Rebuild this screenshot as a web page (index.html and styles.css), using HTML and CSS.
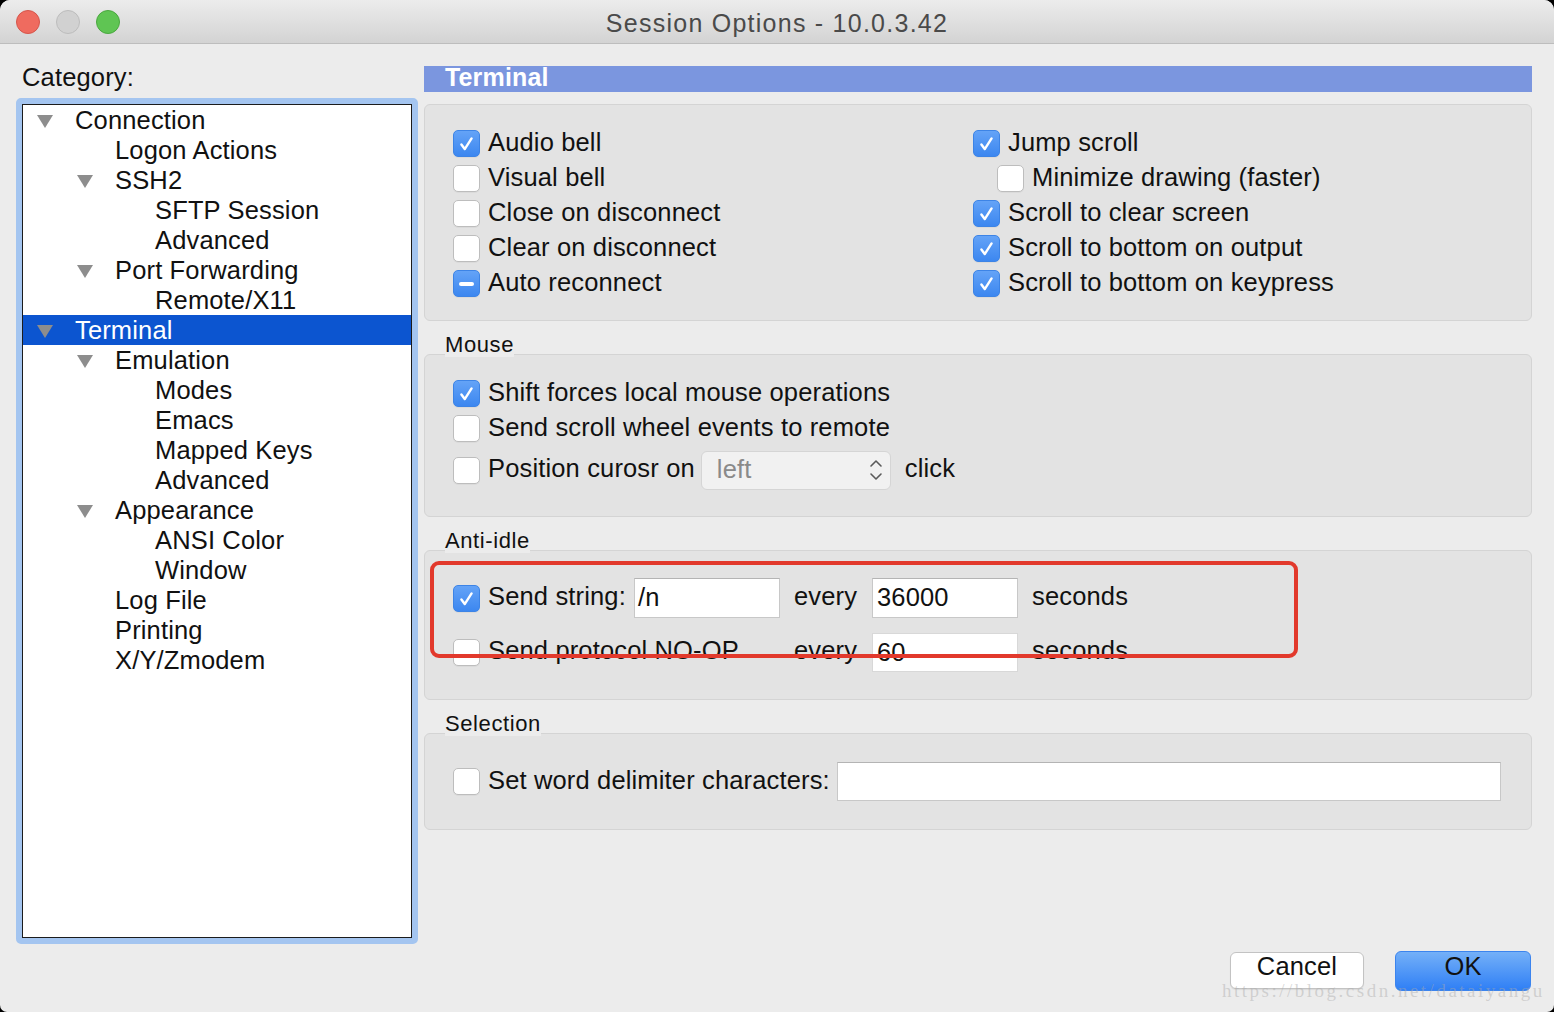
FILE: index.html
```html
<!DOCTYPE html>
<html lang="en">
<head>
<meta charset="utf-8">
<title>Session Options - 10.0.3.42</title>
<link rel="stylesheet" href="styles.css">
</head>
<body>
<div class="window">
  <div class="titlebar">
    <div class="lights">
      <span class="light red"></span>
      <span class="light gray"></span>
      <span class="light green"></span>
    </div>
    <div class="title">Session Options - 10.0.3.42</div>
    <div></div>
  </div>

  <div class="main">
    <div class="left">
      <div class="cat-label">Category:</div>
      <div class="tree-ring">
        <ul class="tree">
          <li class="l0"><span class="tw"><svg viewBox="0 0 16 13" width="16" height="13"><polygon points="0,0 16,0 8,13"/></svg></span>Connection</li>
          <li class="l1"><span class="tw"></span>Logon Actions</li>
          <li class="l1"><span class="tw"><svg viewBox="0 0 16 13" width="16" height="13"><polygon points="0,0 16,0 8,13"/></svg></span>SSH2</li>
          <li class="l2"><span class="tw"></span>SFTP Session</li>
          <li class="l2"><span class="tw"></span>Advanced</li>
          <li class="l1"><span class="tw"><svg viewBox="0 0 16 13" width="16" height="13"><polygon points="0,0 16,0 8,13"/></svg></span>Port Forwarding</li>
          <li class="l2"><span class="tw"></span>Remote/X11</li>
          <li class="l0 sel"><span class="tw"><svg viewBox="0 0 16 13" width="16" height="13"><polygon points="0,0 16,0 8,13"/></svg></span>Terminal</li>
          <li class="l1"><span class="tw"><svg viewBox="0 0 16 13" width="16" height="13"><polygon points="0,0 16,0 8,13"/></svg></span>Emulation</li>
          <li class="l2"><span class="tw"></span>Modes</li>
          <li class="l2"><span class="tw"></span>Emacs</li>
          <li class="l2"><span class="tw"></span>Mapped Keys</li>
          <li class="l2"><span class="tw"></span>Advanced</li>
          <li class="l1"><span class="tw"><svg viewBox="0 0 16 13" width="16" height="13"><polygon points="0,0 16,0 8,13"/></svg></span>Appearance</li>
          <li class="l2"><span class="tw"></span>ANSI Color</li>
          <li class="l2"><span class="tw"></span>Window</li>
          <li class="l1"><span class="tw"></span>Log File</li>
          <li class="l1"><span class="tw"></span>Printing</li>
          <li class="l1"><span class="tw"></span>X/Y/Zmodem</li>
        </ul>
      </div>
    </div>

    <div class="right">
      <div class="page-header">Terminal</div>

      <div class="group g1">
        <div class="col">
          <div class="row"><span class="cb on"><svg viewBox="0 0 27 27"><path d="M8 14.5 L11.6 19.5 L19 8"/></svg></span><span class="lbl">Audio bell</span></div>
          <div class="row"><span class="cb"></span><span class="lbl">Visual bell</span></div>
          <div class="row"><span class="cb"></span><span class="lbl">Close on disconnect</span></div>
          <div class="row"><span class="cb"></span><span class="lbl">Clear on disconnect</span></div>
          <div class="row"><span class="cb mixed"><span class="dash"></span></span><span class="lbl">Auto reconnect</span></div>
        </div>
        <div class="col">
          <div class="row"><span class="cb on"><svg viewBox="0 0 27 27"><path d="M8 14.5 L11.6 19.5 L19 8"/></svg></span><span class="lbl">Jump scroll</span></div>
          <div class="row indent"><span class="cb"></span><span class="lbl">Minimize drawing (faster)</span></div>
          <div class="row"><span class="cb on"><svg viewBox="0 0 27 27"><path d="M8 14.5 L11.6 19.5 L19 8"/></svg></span><span class="lbl">Scroll to clear screen</span></div>
          <div class="row"><span class="cb on"><svg viewBox="0 0 27 27"><path d="M8 14.5 L11.6 19.5 L19 8"/></svg></span><span class="lbl">Scroll to bottom on output</span></div>
          <div class="row"><span class="cb on"><svg viewBox="0 0 27 27"><path d="M8 14.5 L11.6 19.5 L19 8"/></svg></span><span class="lbl">Scroll to bottom on keypress</span></div>
        </div>
      </div>

      <div class="section-title"><span>Mouse</span></div>
      <div class="group g2">
        <div class="row"><span class="cb on"><svg viewBox="0 0 27 27"><path d="M8 14.5 L11.6 19.5 L19 8"/></svg></span><span class="lbl">Shift forces local mouse operations</span></div>
        <div class="row"><span class="cb"></span><span class="lbl">Send scroll wheel events to remote</span></div>
        <div class="row tall"><span class="cb"></span><span class="lbl">Position curosr on</span>
          <span class="select"><span class="sel-text">left</span>
            <svg class="updown" viewBox="0 0 14 26" width="14" height="26"><path d="M2 9 L7 4 L12 9 M2 17 L7 22 L12 17"/></svg>
          </span>
          <span class="lbl after">click</span>
        </div>
      </div>

      <div class="section-title"><span>Anti-idle</span></div>
      <div class="group g3">
        <div class="idle-grid">
          <div class="cell1"><span class="cb on"><svg viewBox="0 0 27 27"><path d="M8 14.5 L11.6 19.5 L19 8"/></svg></span><span class="lbl">Send string:</span><span class="field short">/n</span></div>
          <div class="every">every</div>
          <div class="field">36000</div>
          <div class="secs">seconds</div>

          <div class="cell1"><span class="cb"></span><span class="lbl">Send protocol NO-OP</span></div>
          <div class="every">every</div>
          <div class="field dim">60</div>
          <div class="secs">seconds</div>
        </div>
        <div class="annot"></div>
      </div>

      <div class="section-title"><span>Selection</span></div>
      <div class="group g4">
        <div class="row sel-row"><span class="cb"></span><span class="lbl">Set word delimiter characters:</span><span class="field wide"></span></div>
      </div>
    </div>
  </div>

  <div class="footer">
    <div class="btn cancel">Cancel</div>
    <div class="btn ok">OK</div>
  </div>

  <div class="watermark">https://blog.csdn.net/dataiyangu</div>
</div>
</body>
</html>
```

FILE: styles.css
```css
* { box-sizing: border-box; }

body {
  margin: 0;
  background: #000;
  font-family: "Liberation Sans", Arial, Helvetica, sans-serif;
}

.window {
  position: relative;
  width: 1554px;
  height: 1012px;
  background: #ececec;
  border-radius: 10px 10px 7px 7px;
  overflow: hidden;
  color: #111;
  font-size: 25.5px;
  letter-spacing: 0.15px;
}

/* title bar */
.titlebar {
  height: 44px;
  border-bottom: 1px solid #bdbdbd;
  background: linear-gradient(#ececec, #d3d3d3);
  display: grid;
  grid-template-columns: 1fr auto 1fr;
  align-items: center;
}
.lights {
  display: flex;
  gap: 16px;
  padding-left: 16px;
}
.light {
  width: 24px;
  height: 24px;
  border-radius: 50%;
  border: 1px solid;
}
.light.red { background: #ef6b5f; border-color: #d5554b; }
.light.gray { background: #d1d1d1; border-color: #bcbcbc; }
.light.green { background: #5fc553; border-color: #4aa73f; }
.title {
  font-size: 25px;
  color: #4a4a4a;
  letter-spacing: 1.25px;
  padding-top: 3px;
}

/* main */
.main {
  display: flex;
  gap: 6px;
  padding: 22px 22px 0 16px;
}
.left {
  width: 402px;
  flex: none;
}
.cat-label {
  margin-top: -2px;
  height: 34px;
  line-height: 26px;
  padding-left: 6px;
}
.tree-ring {
  height: 846px;
  border: 6px solid #a4c5f0;
  border-radius: 5px;
}
.tree {
  list-style: none;
  margin: 0;
  padding: 0;
  height: 100%;
  background: #fff;
  border: 1px solid #1c1c1c;
}
.tree li {
  height: 30px;
  line-height: 30px;
  display: flex;
  align-items: center;
  white-space: nowrap;
}
.tree .l0 { padding-left: 14px; }
.tree .l1 { padding-left: 54px; }
.tree .l2 { padding-left: 94px; }
.tree .tw {
  width: 16px;
  height: 13px;
  margin-right: 22px;
  margin-top: 3px;
  flex: none;
  display: flex;
}
.tree .tw svg { fill: #8d8d8d; }
.tree li.sel {
  background: #0c55d0;
  color: #fff;
}

/* right column */
.right {
  width: 1108px;
  flex: none;
  display: flex;
  flex-direction: column;
}
.page-header {
  height: 26px;
  line-height: 23px;
  background: #7b96df;
  color: #fff;
  font-weight: bold;
  font-size: 25px;
  padding-left: 21px;
}
.group {
  background: #e3e3e3;
  border: 1px solid #d4d4d4;
  border-radius: 6px;
}
.g1 {
  margin-top: 12px;
  height: 217px;
  padding: 21px 0 19px 28px;
  display: grid;
  grid-template-columns: 520px 1fr;
}
.row {
  height: 35px;
  display: flex;
  align-items: center;
  white-space: nowrap;
}
.row.indent { padding-left: 24px; }
.lbl {
  line-height: 30px;
  margin-left: 8px;
  margin-bottom: 4px;
}

/* checkboxes */
.cb {
  width: 27px;
  height: 27px;
  flex: none;
  border-radius: 5px;
  background: #fff;
  border: 1px solid #bdbdbd;
  box-shadow: 0 1px 0 rgba(0,0,0,0.04);
  display: flex;
  align-items: center;
  justify-content: center;
}
.cb.on, .cb.mixed {
  background: linear-gradient(#64a3f7, #3c87f0);
  border-color: #3d84e6;
}
.cb svg {
  width: 27px;
  height: 27px;
  fill: none;
  stroke: #fff;
  stroke-width: 2.6;
  stroke-linecap: round;
  stroke-linejoin: round;
}
.cb .dash {
  width: 15px;
  height: 4px;
  border-radius: 2px;
  background: #fff;
}

.section-title {
  height: 33px;
  display: flex;
  align-items: flex-end;
  padding-left: 21px;
  font-size: 22px;
  letter-spacing: 0.6px;
  line-height: 22px;
}
.section-title span {
  position: relative;
  z-index: 1;
  margin-bottom: -3px;
  padding-bottom: 1px;
  background: #ececec;
}

.g2 {
  height: 163px;
  padding: 21px 0 26px 28px;
}
.row.tall {
  height: 40px;
  margin-top: 4px;
}
.select {
  width: 190px;
  height: 39px;
  margin-left: 6px;
  background: #f1f1f1;
  border: 1px solid #d5d5d5;
  border-radius: 6px;
  display: flex;
  align-items: center;
  justify-content: space-between;
  padding: 0 7px 0 15px;
}
.sel-text {
  color: #8a8a8a;
  line-height: 30px;
  margin-bottom: 3px;
}
.updown {
  fill: none;
  stroke: #5a5a5a;
  stroke-width: 1.6;
  stroke-linecap: round;
  stroke-linejoin: round;
}
.lbl.after { margin-left: 14px; }

.g3 {
  position: relative;
  height: 150px;
  padding: 27px 0 27px 28px;
}
.idle-grid {
  display: grid;
  grid-template-columns: 327px 92px 146px auto;
  grid-auto-rows: 40px;
  row-gap: 14px;
  align-items: center;
  white-space: nowrap;
}
.cell1 {
  display: flex;
  align-items: center;
}
.every, .secs {
  padding-left: 14px;
  line-height: 30px;
  margin-bottom: 4px;
}
.field {
  height: 40px;
  background: #fff;
  border: 1px solid #c8c8c8;
  border-top-color: #b4b4b4;
  padding-left: 4px;
  line-height: 36px;
}
.field.short {
  width: 146px;
  margin-left: auto;
  padding-left: 3px;
}
.field.dim {
  border-color: #d8d8d8;
  height: 39px;
}
.annot {
  position: absolute;
  left: 5px;
  top: 10px;
  width: 868px;
  height: 97px;
  border: 4px solid #e2392c;
  border-radius: 9px;
}

.g4 {
  height: 97px;
  padding: 28px 0 28px 28px;
}
.sel-row { height: 39px; }
.field.wide {
  width: 664px;
  height: 39px;
  margin-left: 7px;
}

/* footer */
.footer {
  margin-top: 7px;
  display: flex;
  justify-content: flex-end;
  align-items: flex-start;
  gap: 31px;
  padding-right: 23px;
}
.btn {
  text-align: center;
  border-radius: 6px;
}
.btn.cancel {
  margin-top: 1px;
  width: 134px;
  height: 37px;
  line-height: 26px;
  background: #fff;
  border: 1px solid #c3c3c3;
  box-shadow: 0 1px 1px rgba(0,0,0,0.08);
}
.btn.ok {
  width: 136px;
  height: 40px;
  line-height: 28px;
  background: linear-gradient(#74b0f8, #2f7ff5);
  border: 1px solid #3b84ee;
}

.watermark {
  position: absolute;
  left: 1222px;
  top: 980px;
  font-family: "Liberation Serif", "Times New Roman", serif;
  font-size: 19px;
  letter-spacing: 2.5px;
  color: rgba(170, 170, 170, 0.45);
  white-space: nowrap;
}
```
